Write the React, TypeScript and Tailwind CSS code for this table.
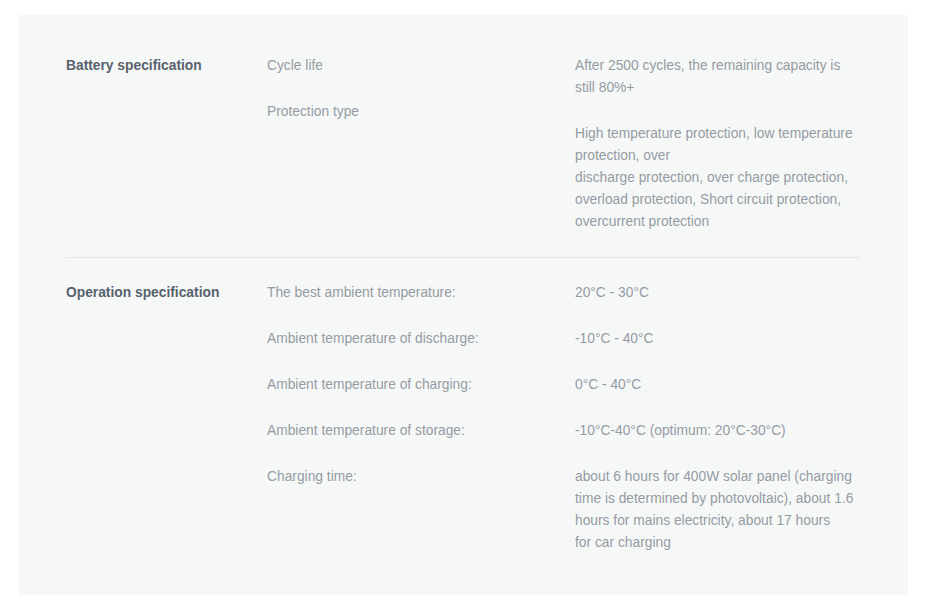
const sections = [
  {
    title: 'Battery specification',
    labels: ['Cycle life', 'Protection type'],
    values: [
      ['After 2500 cycles, the remaining capacity is still 80%+'],
      [
        'High temperature protection, low temperature protection, over',
        'discharge protection, over charge protection, overload protection, Short circuit protection, overcurrent protection',
      ],
    ],
  },
  {
    title: 'Operation specification',
    labels: [
      'The best ambient temperature:',
      'Ambient temperature of discharge:',
      'Ambient temperature of charging:',
      'Ambient temperature of storage:',
      'Charging time:',
    ],
    values: [
      ['20°C - 30°C'],
      ['-10°C - 40°C'],
      ['0°C - 40°C'],
      ['-10°C-40°C (optimum: 20°C-30°C)'],
      [
        'about 6 hours for 400W solar panel (charging time is determined by photovoltaic), about 1.6 hours for mains electricity, about 17 hours',
        'for car charging',
      ],
    ],
  },
];

function App() {
  return (
    <div
      className="min-h-[616px] w-[936px] bg-white pt-[15px] pl-[18px]"
      style={{ fontFamily: '"Liberation Sans", Arial, sans-serif' }}
    >
      <div className="w-[890px] bg-[#f6f8f8] pt-[40px] pb-[41px] pl-[48px]">
        <div className="w-[794px]">
          {sections.map((section, i) => (
            <div
              key={section.title}
              className={
                i === 0
                  ? 'flex border-b border-[#e3e6e6] pb-[24px] text-[13.8px] leading-[22px]'
                  : 'flex pt-[24px] text-[13.8px] leading-[22px]'
              }
            >
              {/* Section title */}
              <div className="w-[201px] shrink-0 font-bold text-[#58626d]">
                {section.title}
              </div>
              {/* Labels */}
              <div className="flex w-[308px] shrink-0 flex-col gap-[24px] text-[#959ba3]">
                {section.labels.map((label) => (
                  <div key={label}>{label}</div>
                ))}
              </div>
              {/* Values */}
              <div className="flex w-[284px] flex-col gap-[24px] text-[#959ba3]">
                {section.values.map((lines, j) => (
                  <div key={j}>
                    {lines.map((line, k) => (
                      <div key={k}>{line}</div>
                    ))}
                  </div>
                ))}
              </div>
            </div>
          ))}
        </div>
      </div>
    </div>
  );
}

export default App;
